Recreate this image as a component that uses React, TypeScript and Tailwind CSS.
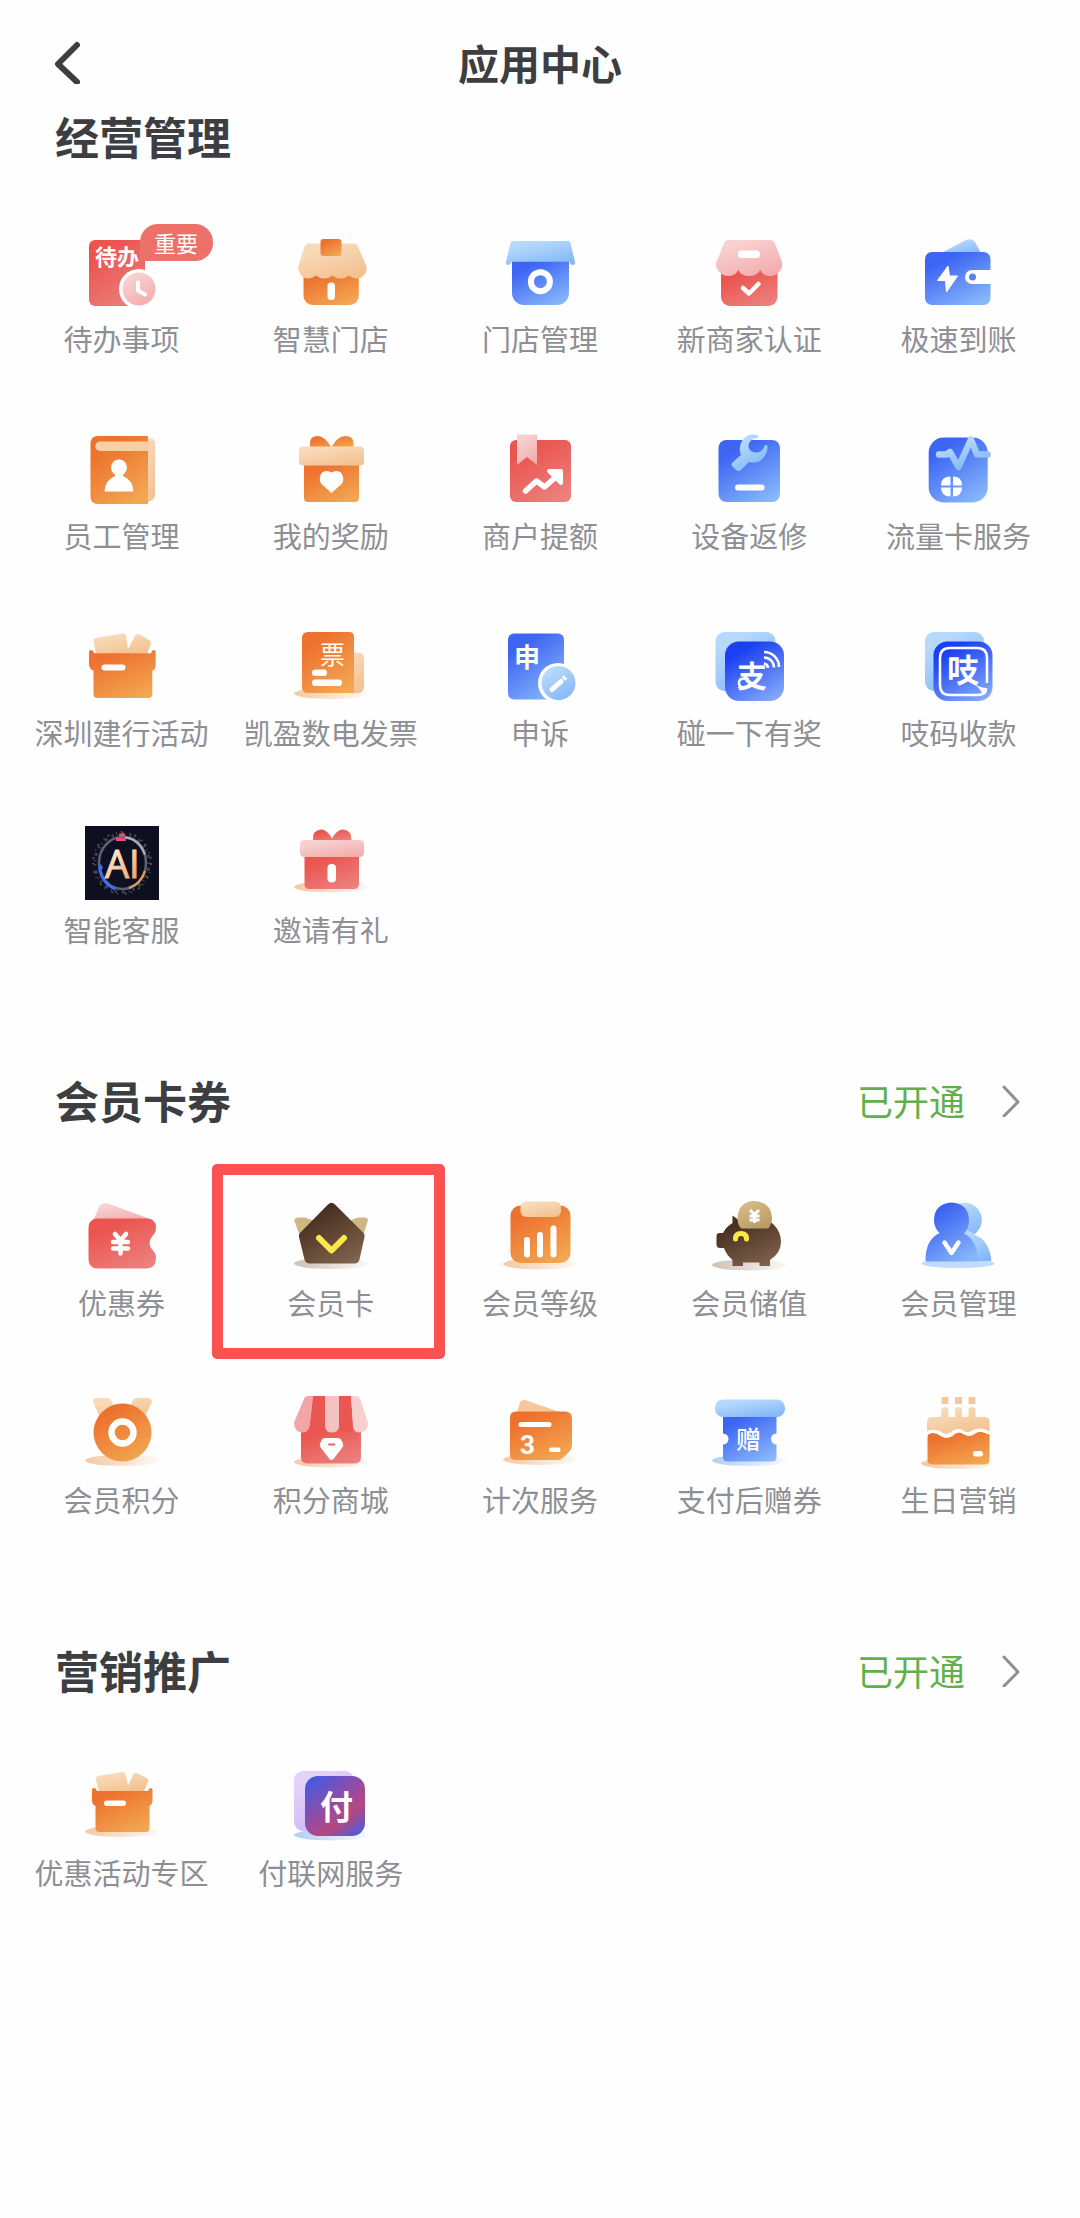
import { ReactNode } from "react";

type AppItem = {
  name: string;
  icon: ReactNode;
  badge?: string;
  highlighted?: boolean;
};

type AppSection = {
  title: string;
  status?: string;
  items: AppItem[];
};

// --- GRADIENTS (shared by all the icons) ---
const gradients = [
  { id: "orange", from: "#ee722f", to: "#f2a852" },
  { id: "peach", from: "#f8dab8", to: "#f3c08f" },
  { id: "red", from: "#eb544f", to: "#ec817e" },
  { id: "pink", from: "#f7d0d0", to: "#f3abab" },
  { id: "blue", from: "#3d64f3", to: "#88b8fb" },
  { id: "sky", from: "#b6d9fb", to: "#80b6f8" },
  { id: "royal", from: "#1a40f2", to: "#84a9fb" },
  { id: "brown", from: "#482e20", to: "#80644d" },
  { id: "gold", from: "#d2b985", to: "#b99862" },
  { id: "lilac", from: "#e3d2f8", to: "#c5b3f2" },
  { id: "ai", from: "#fdf0d8", to: "#ee9a5c" },
];

const cjk = "'Noto Sans CJK SC', sans-serif";

function Gradients() {
  return (
    <svg width="0" height="0" className="absolute" aria-hidden="true">
      <defs>
        {gradients.map((g) => (
          <linearGradient key={g.id} id={g.id} x1="0.2" y1="0" x2="0.8" y2="1">
            <stop offset="0.15" stopColor={g.from} />
            <stop offset="1" stopColor={g.to} />
          </linearGradient>
        ))}
        <linearGradient id="pay" x1="0.1" y1="0" x2="0.9" y2="1">
          <stop offset="0" stopColor="#3f5be6" />
          <stop offset="0.5" stopColor="#9a4aa0" />
          <stop offset="0.7" stopColor="#b5487e" />
          <stop offset="1" stopColor="#4c5bdc" />
        </linearGradient>
        {[
          { id: "shadowOrange", color: "#f3c9a0" },
          { id: "shadowBrown", color: "#cfc0b4" },
          { id: "shadowBlue", color: "#b3cdf6" },
        ].map((s) => (
          <linearGradient key={s.id} id={s.id}>
            <stop offset="0" stopColor={s.color} />
            <stop offset="1" stopColor={s.color} stopOpacity="0.1" />
          </linearGradient>
        ))}
      </defs>
    </svg>
  );
}

function Icon({ children }: { children: ReactNode }) {
  return (
    <svg viewBox="0 0 74 74" className="size-[74px] shrink-0" fill="none" aria-hidden="true">
      {children}
    </svg>
  );
}

function Shadow({ y, fill = "url(#shadowOrange)" }: { y: number; fill?: string }) {
  return <ellipse cx="37" cy={y} rx="37" ry="5.5" fill={fill} />;
}

// --- ICONS ---
const TodoIcon = (
  <Icon>
    <rect x="4" y="5" width="56" height="66" rx="6" fill="url(#red)" />
    <text x="10" y="30" fontSize="22" fontWeight="700" fontFamily={cjk} fill="#fff">待办</text>
    <circle cx="54" cy="54" r="20" fill="#fff" />
    <circle cx="54" cy="54" r="16.5" fill="url(#pink)" />
    <path d="M53 47.5v8l7 4" stroke="#fff" strokeWidth="4" strokeLinecap="round" strokeLinejoin="round" />
  </Icon>
);

const SmartShopIcon = (
  <Icon>
    <path d="M9.5 36h55.3v25a9 9 0 0 1-9 9H18.500a9 9 0 0 1-9-9z" fill="url(#orange)" />
    <path d="M15 8.500h45q3 0 4 3l8.500 20q1 4-2 8-3 4-7 4-5 0-8.500-3-3.500 3-8.300 3t-8.200-3q-3.500 3-8.300 3t-8.400-3q-3.500 3-8 3-4 0-7-4-3.500-4-2.500-8l6.200-20q1.500-3 4.500-3z" fill="url(#peach)" />
    <rect x="26.5" y="4" width="21" height="17" rx="3" fill="url(#orange)" />
    <rect x="33.5" y="47.5" width="7.5" height="17.5" rx="3.5" fill="#fff" />
  </Icon>
);

const ShopManageIcon = (
  <Icon>
    <path d="M9 24h57v34a12 12 0 0 1-12 12H21A12 12 0 0 1 9 58z" fill="url(#blue)" />
    <path d="M10 6h55q2 0 2.500 2l4.500 19q.5 3-2 3t-3.500-3.300H8.500Q7.500 30 5 30t-2-3L7.500 8Q8 6 10 6z" fill="url(#sky)" />
    <circle cx="37.4" cy="46.7" r="9.5" stroke="#fff" strokeWidth="6" />
  </Icon>
);

const VerifyIcon = (
  <Icon>
    <path d="M9 34h56.500v28a9 9 0 0 1-9 9H18a9 9 0 0 1-9-9z" fill="url(#red)" />
    <path d="M16 5h43q2.500 0 3.500 2.500L70 27q1 5-2 9-4 5-10 5-7 0-9.800-6-3.200 6-11 6t-11-6q-3 6-9.800 6-6 0-10-5-3.500-4-2-9l8-19.500Q13.500 5 16 5z" fill="url(#pink)" />
    <rect x="26" y="15.5" width="22" height="7.5" rx="3.5" fill="#fff" />
    <path d="m31 53 6 5.500L46.500 49" stroke="#fff" strokeWidth="4.5" strokeLinecap="round" strokeLinejoin="round" />
  </Icon>
);

const WalletIcon = (
  <Icon>
    <path d="m20 18 25-13q6-2 9 2l7 13z" fill="url(#sky)" />
    <rect x="4" y="17" width="65.5" height="53" rx="7" fill="url(#blue)" />
    <path d="M27 31 16.500 45.500h8L25.500 57l11-16h-8z" fill="#fff" stroke="#fff" strokeLinejoin="round" />
    <path d="M70 35H51a7 7 0 0 0 0 14h19z" fill="#fff" />
    <circle cx="51.5" cy="42" r="3.5" fill="#5a82f5" />
  </Icon>
);

const StaffIcon = (
  <Icon>
    <path d="M58 6h7q5 1 5 6v51q0 5-7 7h-5z" fill="url(#peach)" />
    <path d="M13 4h50v68H13q-7.500 0-7.500-8V12q0-8 7.500-8z" fill="url(#orange)" />
    <path d="M15 9.500h50V19H15a4.700 4.700 0 0 1 0-9.500z" fill="#f6cfa5" />
    <circle cx="34" cy="35.5" r="8" fill="#fff" />
    <path d="M30 40h8v4q10 4 10.500 15.500h-29Q20 48 30 44z" fill="#fff" />
  </Icon>
);

const RewardIcon = (
  <Icon>
    <path d="M37.500 16H16V11q0-7 8-7 6 0 13.500 11Q44 4 51 4q8.500 0 8.500 7v5z" fill="url(#orange)" />
    <path d="M10 30h55v36q0 4-4 4H14q-4 0-4-4z" fill="url(#orange)" />
    <rect x="5" y="14.5" width="65" height="19" rx="4" fill="url(#peach)" />
    <path d="M37.500 61 28 52.500q-3-3-2-7.500 1-6 6.500-6 3 0 5 1.500 2-1.500 5-1.500 5.500 0 6.500 6 1 4.500-2 7.500z" fill="#fff" />
  </Icon>
);

const LimitIcon = (
  <Icon>
    <rect x="7" y="8" width="61" height="62" rx="6" fill="url(#red)" />
    <path d="M14 2.500h20V33l-10-8-10 8z" fill="url(#pink)" />
    <path d="m22.500 59 11-10 8 6L55 43" stroke="#fff" strokeWidth="5.5" strokeLinecap="round" strokeLinejoin="round" />
    <path d="M46 39h12v12z" fill="#fff" stroke="#fff" strokeWidth="4" strokeLinejoin="round" />
  </Icon>
);

const RepairIcon = (
  <Icon>
    <rect x="6.5" y="8" width="61.5" height="62" rx="8" fill="url(#blue)" />
    <path d="M45 3q-10-2-15 6-4 7-1 14l-8 7q-3 3 0 5l3 3q3 2 5 0l8-8q9 2 14-4 5-5 4.500-12-1.500-2-3 0-2 6-7 6.500-6 .5-8.500-4-1.500-5 2-8 4-3 7-3 1-2-1-2.500z" fill="url(#sky)" />
    <rect x="23" y="52.5" width="29.5" height="6" rx="3" fill="#fff" />
  </Icon>
);

const DataCardIcon = (
  <Icon>
    <rect x="7.7" y="5.5" width="59" height="65" rx="15" fill="url(#blue)" />
    <path d="M18 22.500h7.500L29 20l8.500 15L50 7.500l6 15h10.500" stroke="url(#sky)" strokeWidth="6.5" strokeLinecap="round" strokeLinejoin="round" />
    <path d="M29.500 44.500V53.500H20q0-9 9.500-9zM32 44.500q9 0 9 9h-9zM20 55.500h9.500V64.500q-9.500 0-9.500-9zM32 55.500h9q0 9-9 9z" fill="#fff" />
  </Icon>
);

const BoxIcon = (
  <Icon>
    <path d="m11 9 26-4.500q3.500-.5 4 2L43 20l7-13q1.500-3 5-1.500l8 5q4 2 2.500 5L62 25H11L8.500 12q0-2.500 2.500-3z" fill="url(#peach)" />
    <path d="M6 21q2 0 3 3.300h57q1-3.300 3-3.300 1.700 0 1.700 2v12q0 6-3.400 6.700V65q0 4-4 4H12.500q-4 0-4-4V41.700Q4 40 4 35V23q0-2 2-2z" fill="url(#orange)" />
    <rect x="16.5" y="35.5" width="24" height="6" rx="3" fill="#fff" />
  </Icon>
);

const InvoiceIcon = (
  <Icon>
    <Shadow y={64.5} />
    <rect x="44" y="23.5" width="26" height="40.5" rx="6" fill="url(#peach)" />
    <path d="M14 3h41q5 0 5 5v56H14q-6 0-6-6V9q0-6 6-6z" fill="url(#orange)" />
    <text x="26" y="35" fontSize="25" fontFamily={cjk} fill="#fff">票</text>
    <rect x="18" y="40.5" width="15" height="6.5" rx="3.2" fill="#fff" />
    <rect x="18" y="50.5" width="30" height="6.5" rx="3.2" fill="#fff" />
  </Icon>
);

const AppealIcon = (
  <Icon>
    <rect x="5" y="4.5" width="56" height="66" rx="6" fill="url(#blue)" />
    <text x="11" y="38" fontSize="26" fontWeight="700" fontFamily={cjk} fill="#fff">申</text>
    <circle cx="55" cy="54" r="20" fill="#fff" />
    <circle cx="55.5" cy="54" r="17" fill="url(#sky)" />
    <path d="m49 60.500 9-8" stroke="#fff" strokeWidth="5" strokeLinecap="round" />
    <path d="m60.500 50 2-2" stroke="#fff" strokeWidth="5" />
  </Icon>
);

const TapIcon = (
  <Icon>
    <rect x="3.5" y="3" width="60" height="59" rx="9" fill="url(#sky)" />
    <rect x="13" y="12.5" width="59" height="59.5" rx="14" fill="url(#royal)" />
    <text x="25" y="58" fontSize="30" fontWeight="700" fontFamily={cjk} fill="#fff">支</text>
    <path d="M36 50q-9-2-9 4t9 4" stroke="#fff" strokeWidth="2.5" strokeLinecap="round" />
    <path d="M52 34.500a5 5 0 0 1 4 4.500M52 28.500a10 10 0 0 1 10 10M52 23a15 15 0 0 1 15 15" stroke="#fff" strokeWidth="2.5" />
  </Icon>
);

const ZhiCodeIcon = (
  <Icon>
    <rect x="4" y="3" width="59" height="59" rx="9" fill="url(#sky)" />
    <rect x="12.5" y="12.5" width="59" height="59.5" rx="14" fill="url(#royal)" />
    <path d="M66 54V29q0-10-10-10H29q-10 0-10 10v27q0 10 10 10h27q6 0 9-4" stroke="#fff" strokeWidth="2.5" />
    <path d="M52 54q7 5 14 5v3q-1 3-4 4-3-7-10-12z" fill="#fff" />
    <text x="26" y="53" fontSize="32" fontWeight="700" fontFamily={cjk} fill="#fff">吱</text>
  </Icon>
);

const AiIcon = (
  <Icon>
    <rect width="74" height="74" fill="#0e0f20" />
    <ellipse cx="37" cy="37" rx="27" ry="29" stroke="#3d4358" strokeWidth="3" strokeDasharray="1 4 3 5 2 3" />
    <ellipse cx="37" cy="37" rx="29" ry="31" stroke="#77583a" strokeWidth="1.5" strokeDasharray="2 7 1 4" />
    <ellipse cx="37.5" cy="37" rx="23.5" ry="26" stroke="#5b6377" strokeWidth="2.5" />
    <path d="M14.500 42q3 16 16 21" stroke="#3d6ef0" strokeWidth="3" />
    <path d="M44 62q12-4 16-17" stroke="#d89a50" strokeWidth="2.5" />
    <path d="M40 11.500q14 1 20 17" stroke="#a5acb8" strokeWidth="2.5" />
    <path d="M31 13.500h10M34 9h6" stroke="#e0526e" strokeWidth="3" />
    <path d="m16 38 2 4-3 3-2-4z" fill="#3d6ef0" />
    <text x="20" y="52" fontSize="38" fontFamily="'Open Sans', sans-serif" fill="url(#ai)" stroke="url(#ai)">AI</text>
  </Icon>
);

const InviteIcon = (
  <Icon>
    <Shadow y={61} />
    <path d="M38 15H19q-1-11 8-11.500 6 0 11 9 5-9 11-9 9 .5 8.500 11.500z" fill="url(#red)" />
    <path d="M10.500 28H65v30q0 5-5 5H15.500q-5 0-5-5z" fill="url(#red)" />
    <rect x="6" y="14" width="64" height="17" rx="4.5" fill="url(#pink)" />
    <rect x="33.5" y="38" width="8.5" height="18.5" rx="4" fill="#fff" />
  </Icon>
);

const CouponIcon = (
  <Icon>
    <path d="m8 22 6-14q3-5 9-3.500l46 17z" fill="url(#pink)" />
    <path d="M13 19.500h48q10 0 10 9 0 5-3.500 8.500-6 7.500 0 14Q71 54 71 59q0 10.500-10 10.500H13Q3.500 69.500 3.500 60V29q0-9.500 9.500-9.500z" fill="url(#red)" />
    <path d="m30 35 5.500 6.500L41 35M28 43h15M28 49.500h15M35.500 43v11.500" stroke="#fff" strokeWidth="4.5" strokeLinecap="round" strokeLinejoin="round" />
  </Icon>
);

const CrownIcon = (
  <Icon>
    <Shadow y={64.5} fill="url(#shadowBrown)" />
    <path d="M4 18.500h7l11 4L6 37 0 21q1-2 4-2.500zM71 18.500h-7l-11 4L69 37l5-16q0-2-3-2.500z" fill="#d0b682" />
    <path d="M34 5.500q3.500-3.500 7 0L69.500 34q1.500 1.500 1 4l-5 22.500q-1 4-5 4h-45q-4 0-5-4L5 38q-.5-2.500 1-4z" fill="url(#brown)" />
    <path d="m25 39 12.500 12.500L50 39" stroke="#fbe84b" strokeWidth="6" strokeLinecap="round" strokeLinejoin="round" />
  </Icon>
);

const LevelIcon = (
  <Icon>
    <Shadow y={65} />
    <rect x="7.5" y="6.5" width="60" height="57.5" rx="10" fill="url(#orange)" />
    <rect x="17.5" y="2.5" width="40.5" height="15.5" rx="6" fill="url(#peach)" />
    <path d="M24 41v14.500M37 36v19.500M50.500 29.500v26" stroke="#fff" strokeWidth="6" strokeLinecap="round" />
  </Icon>
);

const PiggyIcon = (
  <Icon>
    <Shadow y={66} fill="url(#shadowBrown)" />
    <path d="M20.500 16.500 28 22q7-4 14-4 12 0 20 8 7 7 7 17 0 11-11 18v6H47.500v-3.500H31V67H20.500v-6q-6-5-8.500-12H8q-3.500 0-3.500-3.500V37q0-3 3.500-3h3q3-6 9.500-10z" fill="url(#brown)" />
    <path d="M29 29.500q-4-5-3.500-11 1-16 17-16.500 16 .5 17.500 16.500 0 6-3.500 11z" fill="url(#gold)" />
    <path d="m38 11 4.500 4.500L47 11M37.500 17h10M37.500 21h10M42.500 16v8" stroke="#fff" strokeWidth="3" />
    <path d="M23.500 40q0-5.500 5.500-5.500t5.500 5.500" stroke="#fbe84b" strokeWidth="5" strokeLinecap="round" />
  </Icon>
);

const MemberIcon = (
  <Icon>
    <ellipse cx="37" cy="64.5" rx="36.5" ry="4.5" fill="#c3dbfa" />
    <circle cx="43.5" cy="21" r="17.3" fill="url(#sky)" />
    <path d="M44 30q7 3 10 6 14 5 16.500 26H40z" fill="url(#sky)" />
    <path d="M30.500 3.500q17 1 17.500 18 0 8-5 13 13 6 14.500 28H4.500Q4 41 18.500 34q-5.500-5-5.500-13 .5-16.500 17.500-17.500z" fill="url(#blue)" />
    <path d="m23.500 43.500 7 10.500 7-10.500" stroke="#fff" strokeWidth="4.5" strokeLinecap="round" strokeLinejoin="round" />
  </Icon>
);

const PointsIcon = (
  <Icon>
    <Shadow y={64.5} />
    <path d="M8 6q0-4 4-4h10q3 0 4.500 3L32 16 15 22zM67 6q0-4-4-4H52q-3 0-4.500 3L42 16l17 6z" fill="url(#peach)" />
    <circle cx="37.5" cy="36.5" r="29" fill="url(#orange)" />
    <circle cx="37.5" cy="36.5" r="11" stroke="#fff" strokeWidth="6.5" />
  </Icon>
);

const MallIcon = (
  <Icon>
    <Shadow y={66} />
    <path d="M7 30h60v31q0 6.500-6.500 6.500h-47Q7 67.500 7 61z" fill="url(#red)" />
    <path d="M14 0h5l-3.500 31Q14 36.500 8 36.500q-8-1-8-10L10 3q1-3 4-3z" fill="#f1a6a7" />
    <path d="M19 0h12v31q-2 5.500-8 5.500T15.500 31zM45 0h12l2.500 31q-1.500 5.500-7 5.500T45 31z" fill="#ea5753" />
    <path d="M31 0h14v31q-1 5.500-7 5.500T31 31z" fill="#f5c2c2" />
    <path d="M57 0h4q4 0 5 3l8 23.500q0 9-8 10-6 0-7-5.500z" fill="#f7cfcf" />
    <path d="M31 42h13q2 0 3 1.500l2 4q1 2.500-1 4.500l-8.500 11q-2 2-4 0L27 52q-2-2-1-4.500l2-4Q29 42 31 42z" fill="#fff" />
    <path d="M35 48.500h5.500" stroke="#eb625f" strokeWidth="2" strokeLinecap="round" />
  </Icon>
);

const TimesIcon = (
  <Icon>
    <Shadow y={63.5} />
    <path d="m13 18 4-11q1-3.500 5-3l38 13z" fill="#f5c89c" />
    <path d="M13 15.500h49q7 0 7 7V49q0 4-3 7l-4 4q-4 4-7 4H13q-6 0-6-6V21.500q0-6 6-6z" fill="url(#orange)" />
    <rect x="15.5" y="26" width="33" height="5" rx="2.5" fill="#fff" />
    <text x="17" y="58" fontSize="26" fontWeight="700" fontFamily="Roboto, sans-serif" fill="#fff">3</text>
    <rect x="46" y="51.5" width="11.5" height="4.5" rx="2" fill="#fff" />
  </Icon>
);

const GiftCouponIcon = (
  <Icon>
    <Shadow y={64.5} fill="url(#shadowBlue)" />
    <path d="M11 16h53.500v21.500a5.500 5.500 0 0 0 0 11V61q0 4.500-4.500 4.500H15.500Q11 65.500 11 61V48.500a5.500 5.500 0 0 0 0-11z" fill="url(#blue)" />
    <rect x="3" y="3.5" width="70" height="17.5" rx="8" fill="url(#sky)" />
    <text x="24" y="53" fontSize="25" fontWeight="500" fontFamily={cjk} fill="#fff">赠</text>
  </Icon>
);

const BirthdayIcon = (
  <Icon>
    <Shadow y={67.5} />
    <path d="M20.500 1h7v7h-7zM34 1h7v7h-7zM47.500 1h7v7h-7z" fill="#f5c89c" />
    <path d="M20.500 14q0-3 3.500-3t3.500 3v7H34v-7q0-3 3.500-3t3.500 3v7h6.500v-7q0-3 3.500-3t3.500 3v7H63q5.500 0 5.500 5v11q-4-1-8-2.500-5-2-10 .5-5 3.500-9 0-4-2.500-9 0-6 4.500-10 2-5-3-9-2.500l-7.500 2V26q0-5 5.500-5h8.500z" fill="url(#peach)" />
    <path d="M6.500 41q0-4 6-4 4 0 8 3.500 5 3 11-.5 6-6 12-1.500 5 3 10-.5 5-3.500 9-1.500l6 2v25q0 5-5 5H11.500q-5 0-5-5z" fill="url(#orange)" />
    <path d="M6.500 36.500q9-3 13 1.500 5 3.500 11-.5 6-5.500 12-1 5 3 10-.5 6-4.500 16 1" stroke="#fff" strokeWidth="3" />
    <rect x="52" y="55" width="10" height="5.5" rx="2.5" fill="#fff" />
  </Icon>
);

const PromoIcon = (
  <Icon>
    <Shadow y={62.5} />
    <path d="m13 7 24-4q3-.5 3.500 2L43 17l5-11q1.500-3 4.500-1.500l8 4Q64 10 63 13l-4 9H14L10.500 10q0-2.500 2.500-3z" fill="url(#peach)" />
    <path d="M9 19q2 0 3 3h51q1-3 3-3 1.500 0 1.500 2v10q0 5-3 6v22q0 4-4 4H14.500q-4 0-4-4V37Q7 36 7 31V21q0-2 2-2z" fill="url(#orange)" />
    <rect x="19" y="31.5" width="22" height="5.5" rx="2.7" fill="#fff" />
  </Icon>
);

const PayNetIcon = (
  <Icon>
    <Shadow y={66} fill="url(#shadowBlue)" />
    <rect x="0" y="2" width="60" height="60" rx="9" fill="url(#lilac)" />
    <rect x="11" y="7" width="60" height="60" rx="13" fill="url(#pay)" />
    <text x="26" y="50" fontSize="33" fontWeight="700" fontFamily={cjk} fill="#fff">付</text>
  </Icon>
);

const sections: AppSection[] = [
  {
    title: "经营管理",
    items: [
      { name: "待办事项", icon: TodoIcon, badge: "重要" },
      { name: "智慧门店", icon: SmartShopIcon },
      { name: "门店管理", icon: ShopManageIcon },
      { name: "新商家认证", icon: VerifyIcon },
      { name: "极速到账", icon: WalletIcon },
      { name: "员工管理", icon: StaffIcon },
      { name: "我的奖励", icon: RewardIcon },
      { name: "商户提额", icon: LimitIcon },
      { name: "设备返修", icon: RepairIcon },
      { name: "流量卡服务", icon: DataCardIcon },
      { name: "深圳建行活动", icon: BoxIcon },
      { name: "凯盈数电发票", icon: InvoiceIcon },
      { name: "申诉", icon: AppealIcon },
      { name: "碰一下有奖", icon: TapIcon },
      { name: "吱码收款", icon: ZhiCodeIcon },
      { name: "智能客服", icon: AiIcon },
      { name: "邀请有礼", icon: InviteIcon },
    ],
  },
  {
    title: "会员卡券",
    status: "已开通",
    items: [
      { name: "优惠券", icon: CouponIcon },
      { name: "会员卡", icon: CrownIcon, highlighted: true },
      { name: "会员等级", icon: LevelIcon },
      { name: "会员储值", icon: PiggyIcon },
      { name: "会员管理", icon: MemberIcon },
      { name: "会员积分", icon: PointsIcon },
      { name: "积分商城", icon: MallIcon },
      { name: "计次服务", icon: TimesIcon },
      { name: "支付后赠券", icon: GiftCouponIcon },
      { name: "生日营销", icon: BirthdayIcon },
    ],
  },
  {
    title: "营销推广",
    status: "已开通",
    items: [
      { name: "优惠活动专区", icon: PromoIcon },
      { name: "付联网服务", icon: PayNetIcon },
    ],
  },
];

function AppButton({ item }: { item: AppItem }) {
  return (
    <button type="button" className="relative flex flex-col items-center gap-[9px]">
      {item.icon}
      <span className="text-[29px] leading-10 whitespace-nowrap text-[#8e8f94]">{item.name}</span>
      {item.badge && (
        <span className="absolute -top-[11px] left-1/2 ml-[18px] flex h-[37px] w-[73px] items-center justify-center rounded-[18px] rounded-bl-none bg-[#ec716a] text-[22px] text-white">
          {item.badge}
        </span>
      )}
      {item.highlighted && (
        <span className="absolute -top-[35px] -right-[10px] -bottom-[37px] -left-[14px] rounded-[5px] border-[11px] border-[#fa5151]" />
      )}
    </button>
  );
}

export default function App() {
  return (
    <main className="min-h-screen bg-[#fefefe] px-[17px] font-['Noto_Sans_CJK_SC',sans-serif]">
      <Gradients />

      {/* HEADER */}
      <header className="grid grid-cols-[1fr_auto_1fr] items-center pt-8 pb-[14px]">
        <button type="button" aria-label="返回" className="ml-9 w-7">
          <svg viewBox="0 0 28 44" className="h-11 w-7" fill="none" aria-hidden="true">
            <path d="M24 5 5 24l19 18" stroke="#3d3e41" strokeWidth="6" strokeLinecap="round" strokeLinejoin="round" />
          </svg>
        </button>
        <h1 className="text-[41px] leading-[60px] font-bold text-[#3d3e41]">应用中心</h1>
      </header>

      {/* SECTIONS */}
      {sections.map((section) => (
        <section key={section.title} className="pb-[121px]">
          <div className="mb-[69px] flex h-[60px] items-center justify-between pr-[42px] pl-[38px]">
            <h2 className="text-[44px] leading-[60px] font-bold text-[#3d3e41]">{section.title}</h2>
            {section.status && (
              <a href="#" className="flex items-center gap-9 text-[36px] leading-[60px] text-[#62b04c]">
                {section.status}
                <svg viewBox="0 0 20 34" className="h-[34px] w-5" fill="none" aria-hidden="true">
                  <path d="m3 4 14 15L3 33" stroke="#8e8f94" strokeWidth="3" strokeLinecap="round" strokeLinejoin="round" />
                </svg>
              </a>
            )}
          </div>
          <div className="grid grid-cols-5 gap-y-[74px]">
            {section.items.map((item) => (
              <AppButton key={item.name} item={item} />
            ))}
          </div>
        </section>
      ))}
    </main>
  );
}
